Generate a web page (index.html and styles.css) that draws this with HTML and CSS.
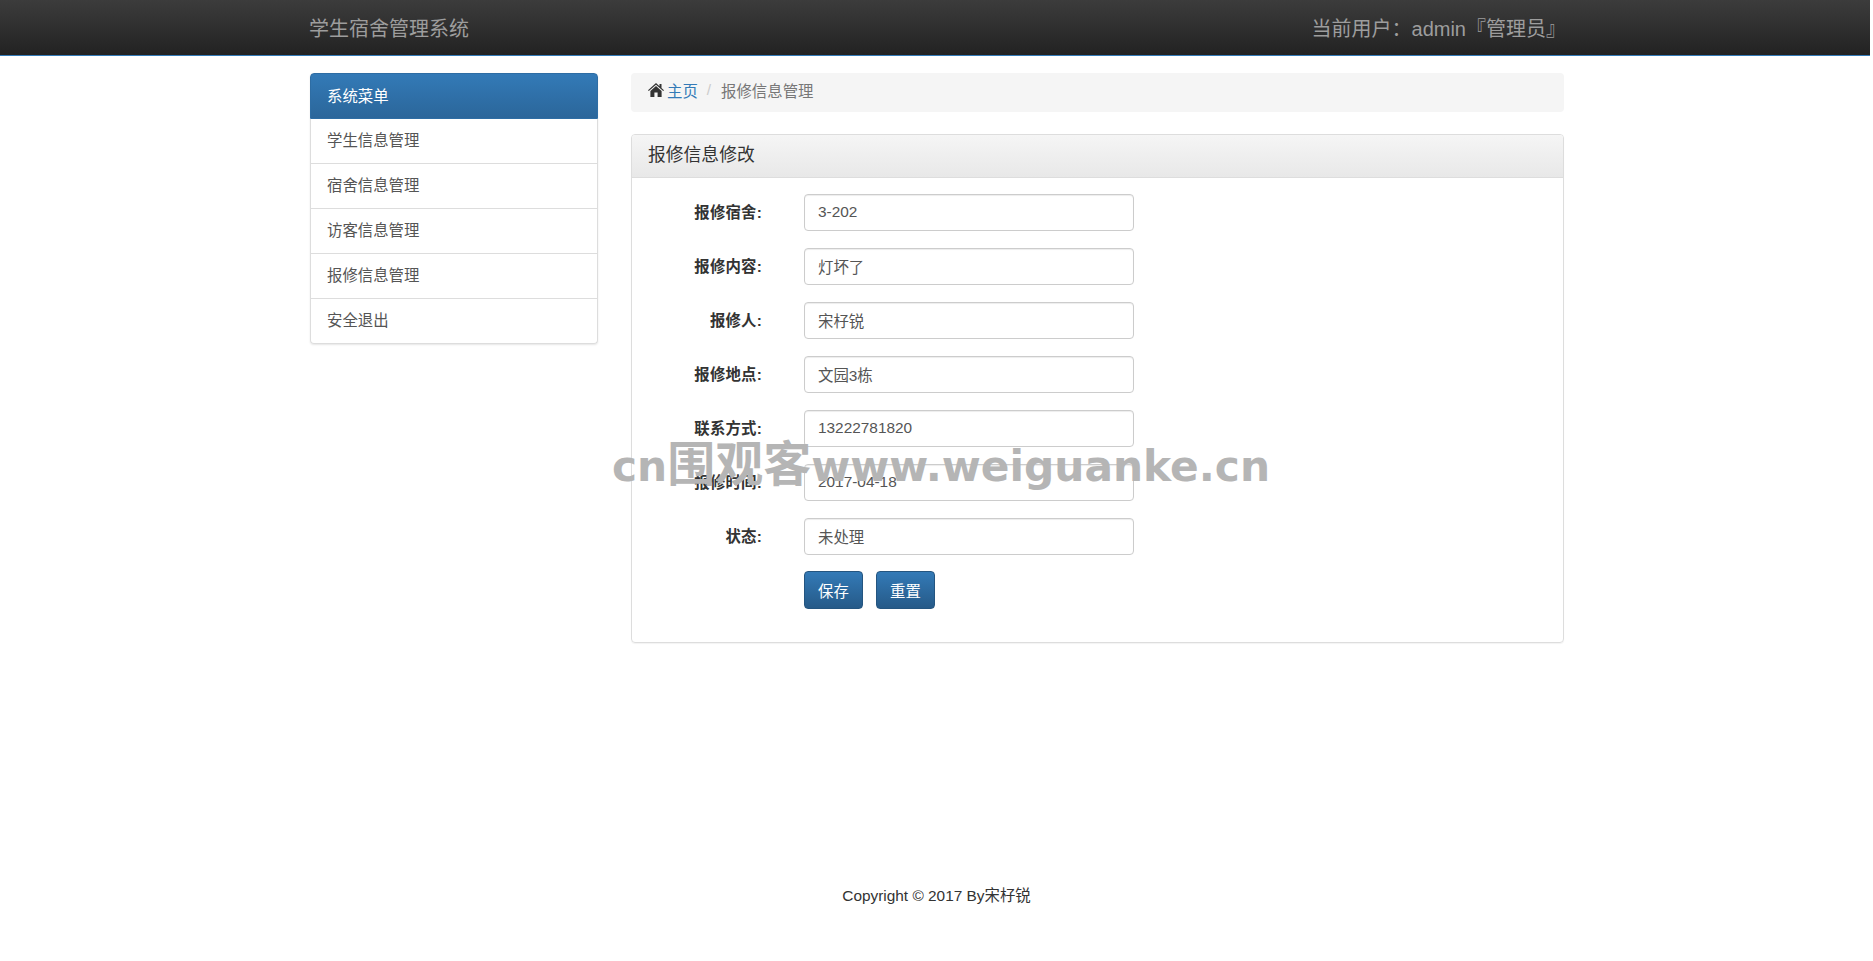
FILE: index.html
```html
<!DOCTYPE html>
<html lang="zh-CN">
<head>
    <meta charset="UTF-8">
    <meta name="viewport" content="width=device-width, initial-scale=1.0">
    <title>学生宿舍管理系统</title>
    <link rel="stylesheet" href="styles.css">
</head>
<body>
    <header class="topbar">
        <div class="container topbar-inner">
            <span class="brand">学生宿舍管理系统</span>
            <span class="current-user">当前用户：admin『管理员』</span>
        </div>
    </header>

    <div class="container content">
        <aside class="sidebar">
            <div class="menu-title">系统菜单</div>
            <a class="menu-item" href="#">学生信息管理</a>
            <a class="menu-item" href="#">宿舍信息管理</a>
            <a class="menu-item" href="#">访客信息管理</a>
            <a class="menu-item" href="#">报修信息管理</a>
            <a class="menu-item" href="#">安全退出</a>
        </aside>

        <main class="main">
            <div class="breadcrumb">
                <svg class="home-icon" viewBox="0 0 16 14" aria-hidden="true">
                    <path d="M8 0 L11.5 3.2 V1 H13.5 V5 L16 7.3 L15.2 8.1 L8 1.7 L0.8 8.1 L0 7.3 Z"/>
                    <path d="M8 3 L13.6 8 V14 H9.6 V9.4 H6.4 V14 H2.4 V8 Z"/>
                </svg>
                <a href="#">主页</a>
                <span class="divider">/</span>
                <span class="crumb-active">报修信息管理</span>
            </div>

            <section class="panel">
                <h3 class="panel-title">报修信息修改</h3>
                <form class="panel-body">
                    <div class="form-row">
                        <label for="room">报修宿舍:</label>
                        <input id="room" type="text" value="3-202">
                    </div>
                    <div class="form-row">
                        <label for="detail">报修内容:</label>
                        <input id="detail" type="text" value="灯坏了">
                    </div>
                    <div class="form-row">
                        <label for="person">报修人:</label>
                        <input id="person" type="text" value="宋杍锐">
                    </div>
                    <div class="form-row">
                        <label for="place">报修地点:</label>
                        <input id="place" type="text" value="文园3栋">
                    </div>
                    <div class="form-row">
                        <label for="phone">联系方式:</label>
                        <input id="phone" type="text" value="13222781820">
                    </div>
                    <div class="form-row">
                        <label for="date">报修时间:</label>
                        <input id="date" type="text" value="2017-04-18">
                    </div>
                    <div class="form-row">
                        <label for="state">状态:</label>
                        <input id="state" type="text" value="未处理">
                    </div>
                    <div class="form-actions">
                        <button type="button" class="btn">保存</button>
                        <button type="reset" class="btn">重置</button>
                    </div>
                </form>
            </section>
        </main>
    </div>

    <footer class="footer">Copyright © 2017 By宋杍锐</footer>

    <div class="watermark">cn<span class="watermark-cjk">围观客</span>www.weiguanke.cn</div>
</body>
</html>
```

FILE: styles.css
```css
* {
    box-sizing: border-box;
}
html, body {
    margin: 0;
}
body {
    position: relative;
    min-height: 961px;
    padding-right: 3px;
    font-family: "Liberation Sans", "Noto Sans CJK SC", sans-serif;
    font-size: 15.4px;
    color: #333;
    background: #fff;
}
a {
    text-decoration: none;
}
.container {
    width: 1280px;
    margin: 0 auto;
    padding: 0 15px;
}
.topbar {
    height: 56px;
    background-image: linear-gradient(to bottom, #3c3c3c, #222);
    border-bottom: 1px solid #337ab7;
}
.topbar-inner {
    display: flex;
    justify-content: space-between;
    align-items: center;
    height: 55px;
    font-size: 20px;
    color: #9d9d9d;
}
.brand {
    margin-left: -1px;
}
.current-user {
    margin-right: -6px;
}
.content {
    display: flex;
    gap: 33px;
    padding-top: 17px;
}
.sidebar {
    flex: none;
    width: 288px;
    align-self: flex-start;
    background: #fff;
    border-radius: 4px;
    box-shadow: 0 1px 2px rgba(0, 0, 0, 0.1);
}
.menu-title {
    height: 46px;
    line-height: 45px;
    padding: 0 16px;
    color: #fff;
    background-image: linear-gradient(to bottom, #337ab7, #2b669a);
    border: 1px solid #2e6da4;
    border-radius: 4px 4px 0 0;
}
.menu-item {
    display: block;
    height: 45px;
    line-height: 44px;
    padding: 0 16px;
    color: #555;
    border: 1px solid #ddd;
    border-top: 0;
}
.menu-item:last-child {
    border-radius: 0 0 4px 4px;
}
.main {
    flex: none;
    width: 933px;
}
.breadcrumb {
    display: flex;
    align-items: center;
    height: 39px;
    padding: 0 17px 5px;
    margin-bottom: 22px;
    background: #f5f5f5;
    border-radius: 4px;
}
.breadcrumb a {
    color: #337ab7;
}
.home-icon {
    width: 16px;
    height: 14px;
    margin-right: 3px;
    fill: #333;
}
.divider {
    padding: 0 10px 0 9px;
    color: #ccc;
}
.crumb-active {
    color: #777;
}
.panel {
    height: 509px;
    border: 1px solid #ddd;
    border-radius: 4px;
    box-shadow: 0 1px 1px rgba(0, 0, 0, 0.05);
}
.panel-title {
    height: 43px;
    margin: 0;
    padding: 0 16px;
    line-height: 41px;
    font-size: 17.8px;
    font-weight: 400;
    color: #333;
    background-image: linear-gradient(to bottom, #f5f5f5, #e8e8e8);
    border-bottom: 1px solid #ddd;
    border-radius: 3px 3px 0 0;
}
.panel-body {
    padding-top: 16px;
}
.form-row {
    display: flex;
    align-items: center;
    height: 37px;
    margin-bottom: 17px;
}
.form-row label {
    flex: none;
    width: 130px;
    padding-bottom: 4px;
    text-align: right;
    font-weight: 700;
    letter-spacing: 0.2px;
}
.form-row input {
    width: 330px;
    height: 37px;
    margin-left: 42px;
    padding: 5px 13px 7px;
    font: inherit;
    color: #555;
    background: #fff;
    border: 1px solid #ccc;
    border-radius: 4px;
    box-shadow: inset 0 1px 1px rgba(0, 0, 0, 0.075);
}
.form-actions {
    display: flex;
    gap: 13px;
    margin-top: -1px;
    padding-left: 172px;
}
.btn {
    width: 59px;
    height: 38px;
    padding: 0;
    font: inherit;
    color: #fff;
    background-image: linear-gradient(to bottom, #337ab7, #265a88);
    border: 1px solid #245580;
    border-radius: 4px;
    cursor: pointer;
}
.footer {
    position: absolute;
    left: 0;
    right: 0;
    top: 886px;
    text-align: center;
    line-height: 20px;
}
.watermark {
    position: absolute;
    left: 612px;
    top: 430px;
    font-family: "DejaVu Sans", "Noto Sans CJK SC", sans-serif;
    font-size: 42.3px;
    font-weight: 700;
    line-height: 60px;
    white-space: nowrap;
    color: #b5b5b5;
}
.watermark-cjk {
    font-family: "Noto Sans CJK SC", sans-serif;
    font-size: 48px;
}
```
